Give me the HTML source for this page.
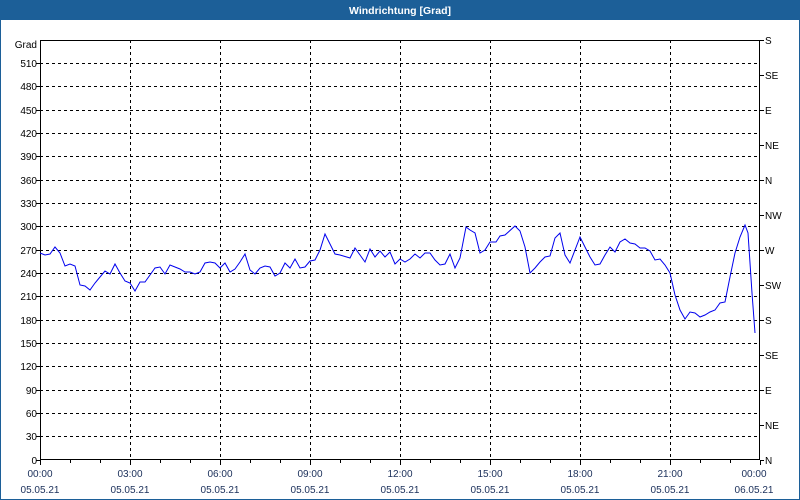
<!DOCTYPE html>
<html><head><meta charset="utf-8"><style>
html,body{margin:0;padding:0;width:800px;height:500px;overflow:hidden;background:#fff}
svg{display:block}
text{font-family:"Liberation Sans",sans-serif;font-size:10px}
</style></head><body>
<svg width="800" height="500" viewBox="0 0 800 500">
<rect x="0" y="0" width="800" height="500" fill="#fff"/>
<rect x="0" y="0" width="800" height="20" fill="#1c5f98"/>
<rect x="0" y="0" width="1" height="500" fill="#1c5f98"/>
<rect x="799" y="0" width="1" height="500" fill="#1c5f98"/>
<rect x="0" y="499" width="800" height="1" fill="#1c5f98"/>
<text x="400" y="14" fill="#fff" font-weight="bold" text-anchor="middle" style="font-size:10.5px">Windrichtung [Grad]</text>
<g stroke="#000" stroke-width="1" stroke-dasharray="3,3" shape-rendering="crispEdges">
<line x1="40" y1="63.5" x2="760" y2="63.5"/>
<line x1="40" y1="86.5" x2="760" y2="86.5"/>
<line x1="40" y1="110.5" x2="760" y2="110.5"/>
<line x1="40" y1="133.5" x2="760" y2="133.5"/>
<line x1="40" y1="156.5" x2="760" y2="156.5"/>
<line x1="40" y1="180.5" x2="760" y2="180.5"/>
<line x1="40" y1="203.5" x2="760" y2="203.5"/>
<line x1="40" y1="226.5" x2="760" y2="226.5"/>
<line x1="40" y1="250.5" x2="760" y2="250.5"/>
<line x1="40" y1="273.5" x2="760" y2="273.5"/>
<line x1="40" y1="296.5" x2="760" y2="296.5"/>
<line x1="40" y1="320.5" x2="760" y2="320.5"/>
<line x1="40" y1="343.5" x2="760" y2="343.5"/>
<line x1="40" y1="366.5" x2="760" y2="366.5"/>
<line x1="40" y1="390.5" x2="760" y2="390.5"/>
<line x1="40" y1="413.5" x2="760" y2="413.5"/>
<line x1="40" y1="436.5" x2="760" y2="436.5"/>
<line x1="130.5" y1="40" x2="130.5" y2="460"/>
<line x1="220.5" y1="40" x2="220.5" y2="460"/>
<line x1="310.5" y1="40" x2="310.5" y2="460"/>
<line x1="400.5" y1="40" x2="400.5" y2="460"/>
<line x1="490.5" y1="40" x2="490.5" y2="460"/>
<line x1="580.5" y1="40" x2="580.5" y2="460"/>
<line x1="670.5" y1="40" x2="670.5" y2="460"/>
</g>
<g stroke="#000" stroke-width="1" shape-rendering="crispEdges" fill="none">
<rect x="40.5" y="40.5" width="719" height="419"/>
<path d="M70.5 460v3M100.5 460v3M130.5 460v5M160.5 460v3M190.5 460v3M220.5 460v5M250.5 460v3M280.5 460v3M310.5 460v5M340.5 460v3M370.5 460v3M400.5 460v5M430.5 460v3M460.5 460v3M490.5 460v5M520.5 460v3M550.5 460v3M580.5 460v5M610.5 460v3M640.5 460v3M670.5 460v5M700.5 460v3M730.5 460v3M760.5 460v5M40.5 460v5"/>
<path d="M760 40.5h4M760 75.5h4M760 110.5h4M760 145.5h4M760 180.5h4M760 215.5h4M760 250.5h4M760 285.5h4M760 320.5h4M760 355.5h4M760 390.5h4M760 425.5h4M760 460.5h4"/>
<path d="M36 63.5h4M36 86.5h4M36 110.5h4M36 133.5h4M36 156.5h4M36 180.5h4M36 203.5h4M36 226.5h4M36 250.5h4M36 273.5h4M36 296.5h4M36 320.5h4M36 343.5h4M36 366.5h4M36 390.5h4M36 413.5h4M36 436.5h4M36 460.5h4"/>
</g>
<g fill="#000" text-anchor="end">
<text x="37" y="48">Grad</text>
<text x="37" y="67">510</text><text x="37" y="90">480</text><text x="37" y="114">450</text>
<text x="37" y="137">420</text><text x="37" y="160">390</text><text x="37" y="184">360</text>
<text x="37" y="207">330</text><text x="37" y="230">300</text><text x="37" y="254">270</text>
<text x="37" y="277">240</text><text x="37" y="300">210</text><text x="37" y="324">180</text>
<text x="37" y="347">150</text><text x="37" y="370">120</text><text x="37" y="394">90</text>
<text x="37" y="417">60</text><text x="37" y="440">30</text><text x="37" y="464">0</text>
</g>
<g fill="#000">
<text x="765" y="44">S</text><text x="765" y="79">SE</text><text x="765" y="114">E</text>
<text x="765" y="149">NE</text><text x="765" y="184">N</text><text x="765" y="219">NW</text>
<text x="765" y="254">W</text><text x="765" y="289">SW</text><text x="765" y="324">S</text>
<text x="765" y="359">SE</text><text x="765" y="394">E</text><text x="765" y="429">NE</text>
<text x="765" y="464">N</text>
</g>
<g fill="#1a2f5a" text-anchor="middle">
<text x="40" y="477">00:00</text><text x="40" y="493">05.05.21</text>
<text x="130" y="477">03:00</text><text x="130" y="493">05.05.21</text>
<text x="220" y="477">06:00</text><text x="220" y="493">05.05.21</text>
<text x="310" y="477">09:00</text><text x="310" y="493">05.05.21</text>
<text x="400" y="477">12:00</text><text x="400" y="493">05.05.21</text>
<text x="490" y="477">15:00</text><text x="490" y="493">05.05.21</text>
<text x="580" y="477">18:00</text><text x="580" y="493">05.05.21</text>
<text x="670" y="477">21:00</text><text x="670" y="493">05.05.21</text>
<text x="754" y="477">00:00</text><text x="754" y="493">06.05.21</text>
</g>
<polyline fill="none" stroke="#0000ee" stroke-width="1" points="40,253 45,255 50,254 55,247 60,253 65,266 70,264 75,266 80,285 85,286 90,290 95,283 100,277 105,271 110,274 115,264 120,273 125,281 130,283 135,291 140,282 145,282 150,275 155,268 160,267 165,274 170,265 175,267 180,269 185,272 190,272 195,274 200,272 205,263 210,262 215,263 220,268 225,263 230,272 235,269 240,262 245,254 250,270 255,274 260,268 265,266 270,267 275,276 280,273 285,263 290,268 295,259 300,268 305,267 310,261 315,260 320,250 325,234 330,244 335,254 340,255 350,258 355,248 360,255 365,262 370,249 375,257 380,251 385,257 390,252 395,264 400,259 405,262 410,259 415,254 420,258 425,253 430,253 435,260 440,265 445,264 450,254 455,268 460,258 466,227 470,230 475,233 480,253 485,250 490,242 496,242 500,236 505,235 515,226 520,231 525,247 530,273 535,268 540,262 545,257 550,256 555,238 560,233 565,255 570,263 580,237 585,247 590,257 595,265 600,264 605,255 610,247 615,252 620,242 625,239 630,243 635,244 640,248 645,248 650,251 655,260 660,259 665,265 670,273 675,295 680,310 685,319 690,312 695,313 700,317 705,315 710,312 715,310 720,303 725,302 730,277 735,253 740,237 745,225 748,233 752,293 755,333"/>
</svg>
</body></html>
